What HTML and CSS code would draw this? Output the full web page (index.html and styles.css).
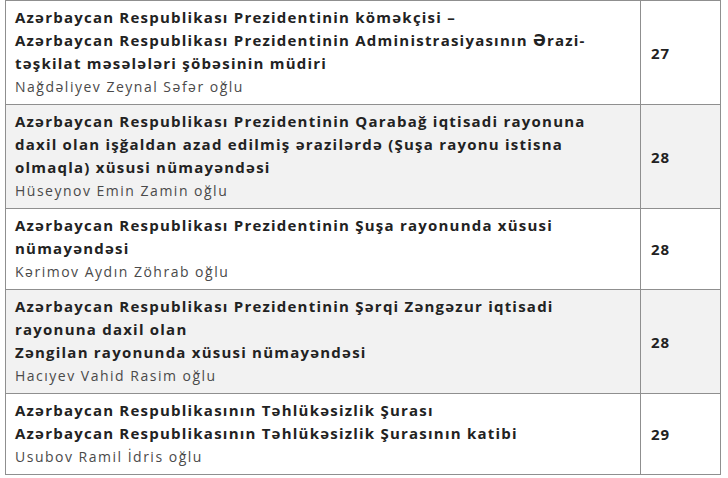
FILE: index.html
```html
<!DOCTYPE html>
<html lang="az">
<head>
<meta charset="utf-8">
<link rel="stylesheet" href="styles.css">
</head>
<body>
<table class="list">
  <tr class="row">
    <td class="info">
      <div class="title">Azərbaycan Respublikası Prezidentinin köməkçisi –<br>Azərbaycan Respublikası Prezidentinin Administrasiyasının Ərazi-<br>təşkilat məsələləri şöbəsinin müdiri</div>
      <div class="name">Nağdəliyev Zeynal Səfər oğlu</div>
    </td>
    <td class="num">27</td>
  </tr>
  <tr class="row alt">
    <td class="info">
      <div class="title">Azərbaycan Respublikası Prezidentinin Qarabağ iqtisadi rayonuna<br>daxil olan işğaldan azad edilmiş ərazilərdə (Şuşa rayonu istisna<br>olmaqla) xüsusi nümayəndəsi</div>
      <div class="name">Hüseynov Emin Zamin oğlu</div>
    </td>
    <td class="num">28</td>
  </tr>
  <tr class="row">
    <td class="info">
      <div class="title">Azərbaycan Respublikası Prezidentinin Şuşa rayonunda xüsusi<br>nümayəndəsi</div>
      <div class="name">Kərimov Aydın Zöhrab oğlu</div>
    </td>
    <td class="num">28</td>
  </tr>
  <tr class="row alt">
    <td class="info">
      <div class="title">Azərbaycan Respublikası Prezidentinin Şərqi Zəngəzur iqtisadi<br>rayonuna daxil olan<br>Zəngilan rayonunda xüsusi nümayəndəsi</div>
      <div class="name">Hacıyev Vahid Rasim oğlu</div>
    </td>
    <td class="num">28</td>
  </tr>
  <tr class="row">
    <td class="info">
      <div class="title">Azərbaycan Respublikasının Təhlükəsizlik Şurası<br>Azərbaycan Respublikasının Təhlükəsizlik Şurasının katibi</div>
      <div class="name">Usubov Ramil İdris oğlu</div>
    </td>
    <td class="num">29</td>
  </tr>
</table>
</body>
</html>
```

FILE: styles.css
```css
html, body {
  margin: 0;
  padding: 0;
  background: #ffffff;
}
body {
  font-family: "Open Sans", "DejaVu Sans", sans-serif;
  color: #222222;
}
.list {
  margin-left: 5px;
  width: 716px;
  border-collapse: collapse;
}
.row td {
  border: 1px solid #8f8f8f;
  vertical-align: middle;
}
.row.alt td {
  background: #f2f2f2;
}
.info {
  padding: 5px 10px 6px 9px;
  width: 615px;
}
.title {
  font-size: 15px;
  font-weight: 700;
  line-height: 23px;
  white-space: nowrap;
  letter-spacing: 1.22px;
}
.name {
  font-size: 14px;
  font-weight: 400;
  line-height: 23px;
  color: #4a4a4a;
  white-space: nowrap;
  letter-spacing: 1.5px;
}
.num {
  padding: 0 10px;
  font-size: 15px;
  font-weight: 700;
  letter-spacing: 0.8px;
}
```
